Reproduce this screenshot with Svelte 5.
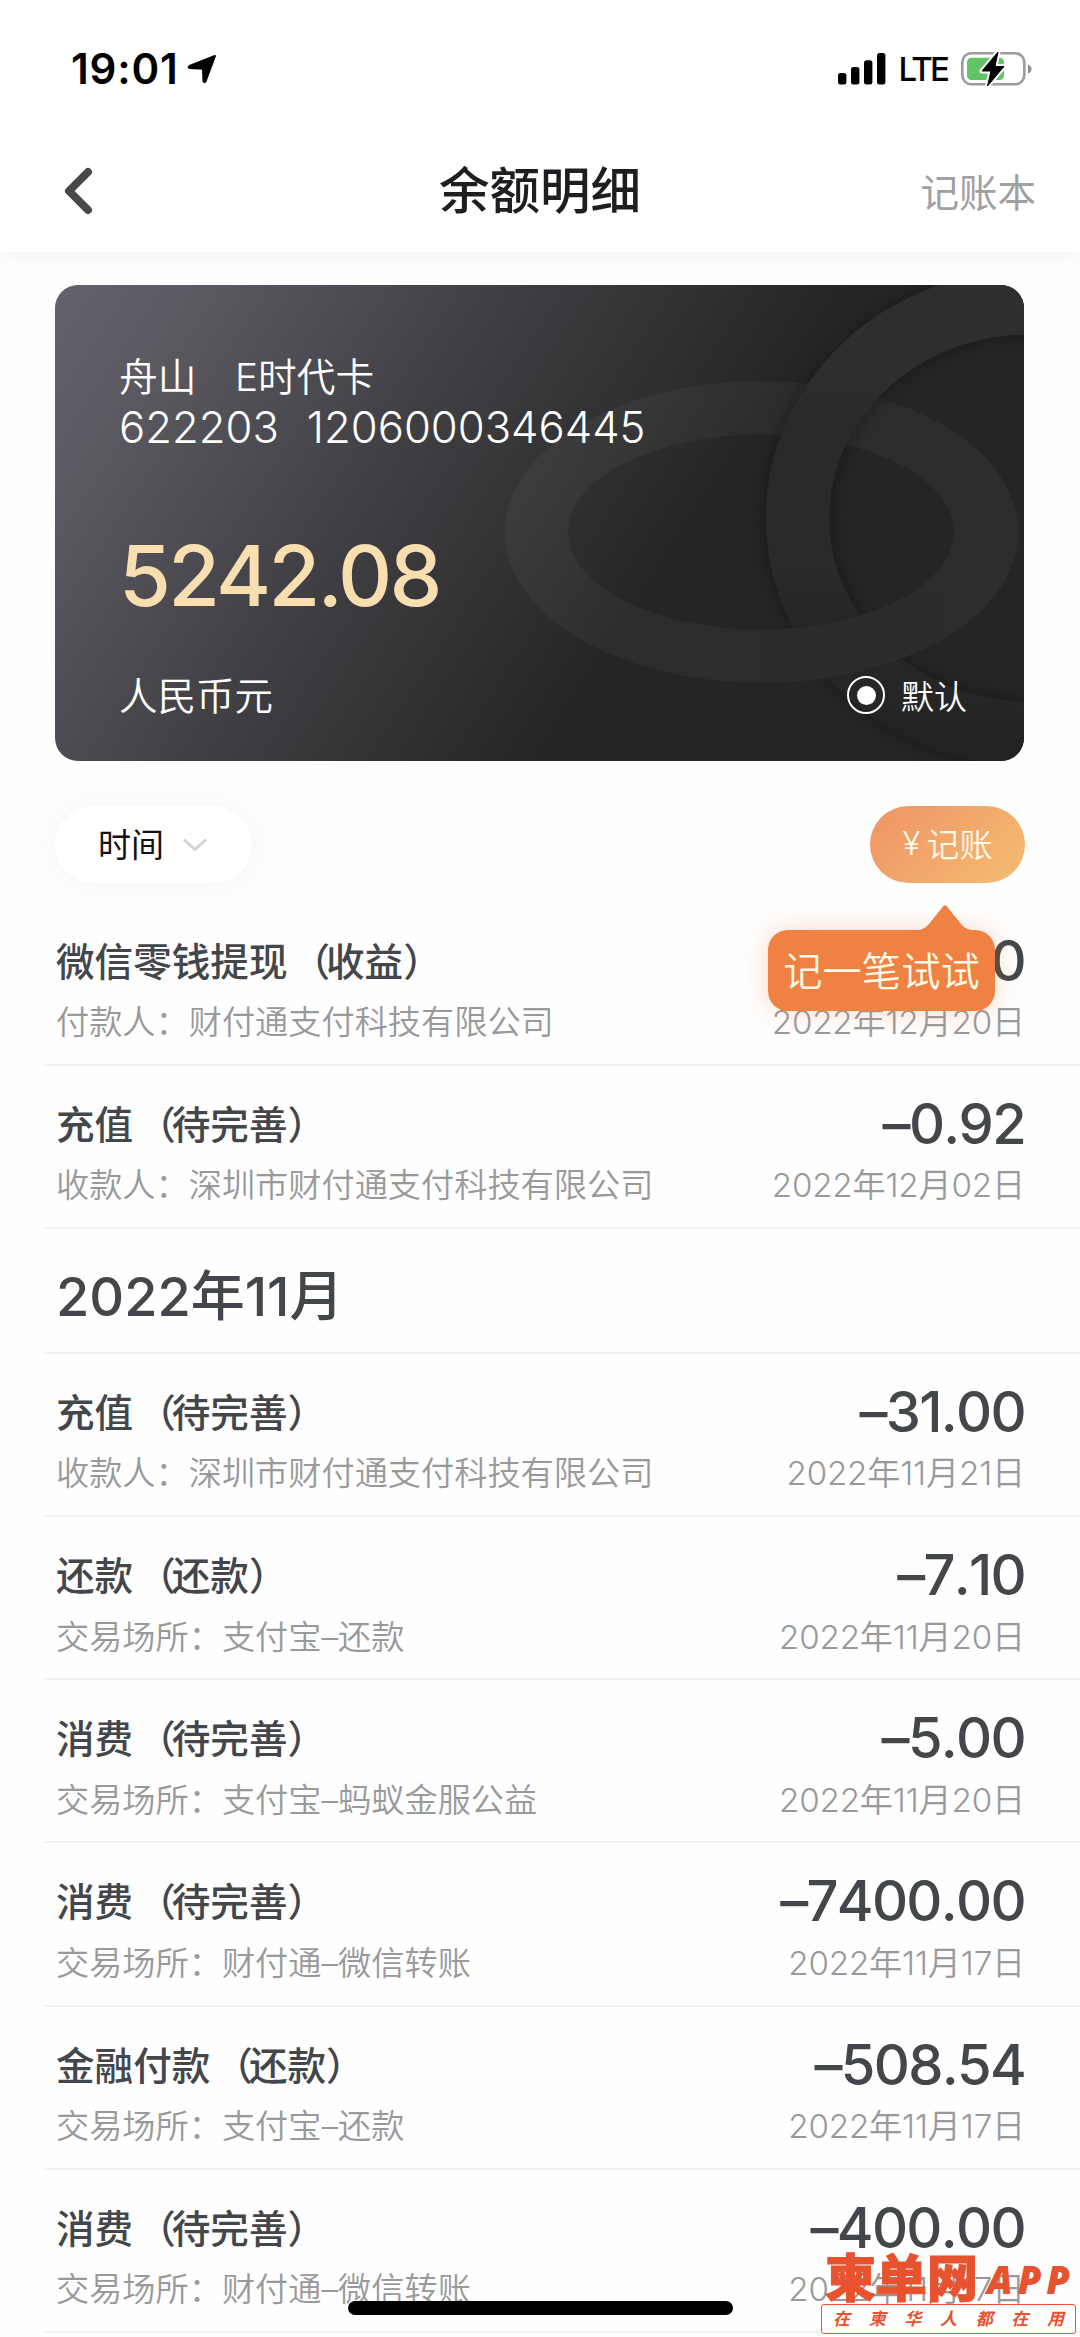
<script>
  const groups = [
    {
      month: "",
      items: [
        { title: "微信零钱提现", tag: "收益", sub: "付款人：财付通支付科技有限公司", amount: "2000.00", date: "2022年12月20日" },
        { title: "充值", tag: "待完善", sub: "收款人：深圳市财付通支付科技有限公司", amount: "–0.92", date: "2022年12月02日" },
      ],
    },
    {
      month: "2022年11月",
      items: [
        { title: "充值", tag: "待完善", sub: "收款人：深圳市财付通支付科技有限公司", amount: "–31.00", date: "2022年11月21日" },
        { title: "还款", tag: "还款", sub: "交易场所：支付宝–还款", amount: "–7.10", date: "2022年11月20日" },
        { title: "消费", tag: "待完善", sub: "交易场所：支付宝–蚂蚁金服公益", amount: "–5.00", date: "2022年11月20日" },
        { title: "消费", tag: "待完善", sub: "交易场所：财付通–微信转账", amount: "–7400.00", date: "2022年11月17日" },
        { title: "金融付款", tag: "还款", sub: "交易场所：支付宝–还款", amount: "–508.54", date: "2022年11月17日" },
        { title: "消费", tag: "待完善", sub: "交易场所：财付通–微信转账", amount: "–400.00", date: "2022年11月17日" },
      ],
    },
  ];

  let isDefault = $state(true);
  let showTip = $state(true);
</script>

<div class="screen" lang="zh-CN">
  <header>
    <div class="status">
      <div class="clock">
        <span>19:01</span>
        <svg width="31" height="30" viewBox="0 0 31 30">
          <path d="M28 2 L18.500 27.500 Q17.500 28.800 16.500 27.500 L16 14.800 L2.500 14 Q0.800 13.200 2.500 12 Z" fill="#000" stroke="#000" stroke-width="2" stroke-linejoin="round" />
        </svg>
      </div>
      <div class="signals">
        <svg width="48" height="32" viewBox="0 0 48 32">
          <rect x="0" y="20" width="8.4" height="11.5" rx="2.5" />
          <rect x="13" y="14" width="8.4" height="17.5" rx="2.5" />
          <rect x="26" y="7.3" width="8.4" height="24.2" rx="2.5" />
          <rect x="39" y="0" width="8.4" height="31.5" rx="2.5" />
        </svg>
        <span class="lte">LTE</span>
        <svg width="72" height="36" viewBox="0 0 72 36">
          <rect x="1.3" y="2.3" width="62" height="31" rx="9" fill="none" stroke="#9c9ca0" stroke-width="2.6" />
          <path d="M67 13.5 Q70.5 15 70.5 18 Q70.5 21 67 22.5 Z" fill="#8c8c90" />
          <rect x="6" y="6.7" width="37" height="22.4" rx="4.5" fill="#62c466" />
          <path d="M37 1 L21 20 H30 L26.5 35 L43 15.5 H34 Z" fill="#000" stroke="#fff" stroke-width="5" stroke-linejoin="round" />
          <path d="M37 1 L21 20 H30 L26.5 35 L43 15.5 H34 Z" fill="#000" stroke="#000" stroke-width="1" stroke-linejoin="round" />
        </svg>
      </div>
    </div>
    <nav>
      <button class="back" aria-label="返回">
        <svg width="36" height="50" viewBox="0 0 36 50">
          <path d="M29 6 L10 25 L29 44" fill="none" stroke="#484848" stroke-width="8" stroke-linecap="round" stroke-linejoin="round" />
        </svg>
      </button>
      <h1>余额明细</h1>
      <button class="book">记账本</button>
    </nav>
  </header>

  <main>
    <section class="card">
      <svg class="rings" viewBox="0 0 969 476">
        <defs>
          <linearGradient id="band" x1="0" y1="0" x2="0" y2="1">
            <stop offset="0" stop-color="#2f2f2f" />
            <stop offset="0.5" stop-color="#2a2a2a" />
            <stop offset="0.8" stop-color="#272727" />
            <stop offset="1" stop-color="#222" />
          </linearGradient>
          <filter id="soft" x="-20%" y="-20%" width="140%" height="140%">
            <feDropShadow dx="0" dy="0" stdDeviation="12" flood-color="#181818" flood-opacity="0.35" />
          </filter>
          <clipPath id="cross">
            <rect x="700" y="300" width="190" height="110" />
          </clipPath>
        </defs>
        <path d="M449.500 247a257 151 0 1 0 514 0a257 151 0 1 0 -514 0Z M513 247a193 97.500 0 1 0 386 0a193 97.500 0 1 0 -386 0Z" fill="#fff" fill-opacity="0.04" fill-rule="evenodd" />
        <path d="M711 233a264 248 0 1 0 528 0a264 248 0 1 0 -528 0Z M774 233a201 184 0 1 0 402 0a201 184 0 1 0 -402 0Z" fill="url(#band)" fill-rule="evenodd" filter="url(#soft)" />
        <path clip-path="url(#cross)" d="M449.500 247a257 151 0 1 0 514 0a257 151 0 1 0 -514 0Z M513 247a193 97.500 0 1 0 386 0a193 97.500 0 1 0 -386 0Z" fill="#2c2c2c" fill-rule="evenodd" />
      </svg>
      <div class="card-body">
        <div class="name">舟山　E时代卡</div>
        <div class="number"><span>622203</span><span>1206000346445</span></div>
        <div class="balance">5242.08</div>
        <div class="card-foot">
          <span>人民币元</span>
          <button class="default" onclick={() => (isDefault = !isDefault)}>
            <i class:on={isDefault}></i>
            默认
          </button>
        </div>
      </div>
    </section>

    <div class="toolbar">
      <button class="filter">
        时间
        <svg width="26" height="16" viewBox="0 0 26 16">
          <path d="M2 2.500 L13 12.500 L24 2.500" fill="none" stroke="#d4d4d4" stroke-width="3" />
        </svg>
      </button>
      <div class="record-wrap">
        <button class="record" onclick={() => (showTip = !showTip)}>
          <span class="yen">¥</span>记账
        </button>
        {#if showTip}
          <div class="tip">
            <svg width="56" height="28" viewBox="0 0 56 28">
              <path d="M0 28 V26 Q7 26 12 20 L26 2.500 Q28 0 30 2.500 L44 20 Q49 26 56 26 V28 Z" fill="#ef8143" />
            </svg>
            记一笔试试
          </div>
        {/if}
      </div>
    </div>

    {#each groups as group}
      {#if group.month}
        <h2>{group.month}</h2>
      {/if}
      {#each group.items as item}
        <div class="row">
          <div class="line">
            <span class="title">{item.title}<span class="open">（</span>{item.tag}）</span>
            <span class="amount">{item.amount}</span>
          </div>
          <div class="line small">
            <span class="sub">{item.sub}</span>
            <span class="date">{item.date}</span>
          </div>
        </div>
      {/each}
    {/each}
  </main>

  <div class="home-bar"></div>

  <div class="mark">
    <div class="mark-top"><b>柬单网</b><em>APP</em></div>
    <div class="mark-box">
      {#each "在柬华人都在用" as ch}<span>{ch}</span>{/each}
    </div>
  </div>
</div>

<style>
  :global(body) {
    background: #fefefe;
  }
  .screen {
    position: relative;
    width: 1080px;
    height: 2337px;
    overflow: hidden;
    background: #fefefe;
    font-family: Inter, "Noto Sans CJK SC", sans-serif;
    color: #43464b;
  }
  button {
    border: 0;
    padding: 0;
    background: none;
    font: inherit;
    color: inherit;
    cursor: pointer;
  }
  svg {
    display: block;
    flex: none;
  }

  /* header */
  header {
    height: 252px;
    background: #fff;
    box-shadow: 0 4px 22px rgba(0, 0, 0, 0.05);
  }
  .status {
    display: flex;
    justify-content: space-between;
    align-items: center;
    height: 137px;
    padding: 0 47px 0 71px;
    color: #000;
  }
  .clock,
  .signals {
    display: flex;
    align-items: center;
  }
  .clock {
    gap: 9px;
    font-size: 42px;
    font-weight: 600;
    letter-spacing: 0.8px;
  }
  .lte {
    margin: 0 14px 0 12px;
    font-size: 33px;
    font-weight: 500;
    letter-spacing: -2.8px;
    line-height: 36px;
  }
  nav {
    display: grid;
    grid-template-columns: 200px 1fr 200px;
    align-items: center;
    height: 107px;
    padding: 0 44px 0 59px;
  }
  h1 {
    margin: 0;
    padding-right: 15px;
    text-align: center;
    font-size: 50.5px;
    font-weight: 500;
    line-height: 60px;
    color: #1d1e22;
  }
  .book {
    padding-bottom: 1px;
    text-align: right;
    font-size: 38.5px;
    color: #a0a0a3;
  }

  /* card */
  .card {
    position: relative;
    width: 969px;
    height: 476px;
    margin: 33px 0 0 55px;
    border-radius: 23px;
    overflow: hidden;
    background: linear-gradient(123deg, #64636d 0%, #5a5960 12%, #414045 34%, #343436 47%, #252525 62%);
    color: #fff;
  }
  .rings {
    position: absolute;
    inset: 0;
    width: 100%;
    height: 100%;
  }
  .card-body {
    position: relative;
    padding: 66px 57px 0 64px;
    font-weight: 350;
  }
  .name {
    height: 52px;
    font-size: 38.7px;
    line-height: 52px;
  }
  .number {
    display: flex;
    gap: 28px;
    height: 50px;
    font-size: 43.6px;
    line-height: 50px;
  }
  .balance {
    height: 100px;
    margin-top: 73px;
    font-size: 84px;
    font-weight: 500;
    letter-spacing: -2.7px;
    line-height: 100px;
    color: #f9deb0;
  }
  .card-foot {
    display: flex;
    justify-content: space-between;
    align-items: center;
    height: 52px;
    margin-top: 44px;
    font-size: 38.5px;
  }
  .card-foot > span {
    padding-bottom: 6px;
  }
  .default {
    display: flex;
    align-items: center;
    gap: 16px;
    padding-bottom: 2px;
    font-size: 33px;
  }
  .default i {
    display: grid;
    place-items: center;
    width: 34px;
    height: 34px;
    border: 2px solid #fff;
    border-radius: 50%;
  }
  .default i.on::after {
    content: "";
    width: 19px;
    height: 19px;
    border-radius: 50%;
    background: #fff;
  }

  /* toolbar */
  .toolbar {
    display: flex;
    justify-content: space-between;
    align-items: flex-start;
    height: 96.5px;
    padding: 45px 55px 0;
  }
  .filter,
  .record {
    display: flex;
    align-items: center;
    box-sizing: border-box;
    height: 77px;
    padding-bottom: 3px;
    border-radius: 39px;
    font-size: 33px;
  }
  .filter {
    gap: 18px;
    width: 197px;
    padding-left: 43px;
    background: #fff;
    color: #111;
    box-shadow: 0 0 30px rgba(0, 0, 0, 0.05);
  }
  .filter svg {
    margin-top: 3px;
  }
  .record-wrap {
    position: relative;
  }
  .record {
    justify-content: center;
    gap: 6px;
    width: 155px;
    background: linear-gradient(135deg, #ef9366, #f4bd71);
    color: #fff9e8;
    font-weight: 350;
  }
  .tip {
    position: absolute;
    top: 124px;
    right: 30px;
    z-index: 2;
    width: 227px;
    height: 81px;
    border-radius: 20px;
    background: #ef8143;
    box-shadow: 0 0 26px rgba(239, 129, 67, 0.3);
    color: #fff9e8;
    font-size: 39.3px;
    font-weight: 350;
    line-height: 84px;
    text-align: center;
    white-space: nowrap;
  }
  .tip svg {
    position: absolute;
    top: -26px;
    left: 149px;
  }

  /* list */
  .row,
  h2 {
    box-sizing: border-box;
    margin: 0 0 0 44px;
    padding: 0 55px 0 12px;
    border-bottom: 2px solid #f2f2f3;
  }
  .row {
    height: 163.2px;
    padding-top: 25px;
  }
  h2 {
    height: 125px;
    font-size: 54px;
    font-weight: 500;
    line-height: 135px;
  }
  .line {
    display: flex;
    justify-content: space-between;
    align-items: center;
    height: 66px;
    white-space: nowrap;
  }
  .small {
    height: 52px;
    font-size: 33.2px;
    font-weight: 350;
    color: #99999c;
  }
  .title {
    padding-bottom: 4px;
    font-size: 38.6px;
    font-weight: 500;
  }
  .open {
    margin: 0 -4px 0 4px;
  }
  .amount {
    font-size: 56px;
    font-weight: 550;
    font-kerning: none;
    letter-spacing: -1.7px;
  }
  .date {
    letter-spacing: -0.2px;
  }

  /* overlays */
  .home-bar {
    position: absolute;
    left: 348px;
    bottom: 22px;
    width: 385px;
    height: 14px;
    border-radius: 7px;
    background: #000;
  }
  .mark {
    position: absolute;
    right: 4px;
    bottom: 3px;
    width: 255px;
    color: #e8532f;
  }
  .mark-top {
    display: flex;
    align-items: center;
    gap: 9px;
    height: 51px;
    padding-left: 4px;
    white-space: nowrap;
  }
  .mark-top b {
    font-size: 51px;
    font-weight: 900;
    line-height: 51px;
    -webkit-text-stroke: 1px #e8532f;
  }
  .mark-top em {
    font: italic 800 38px "Open Sans", sans-serif;
    letter-spacing: 5px;
  }
  .mark-box {
    display: flex;
    justify-content: space-between;
    align-items: center;
    box-sizing: border-box;
    height: 30px;
    padding: 0 11px;
    border: 1.5px solid #e8532f;
    border-radius: 3px;
    background: #fff;
    font-size: 17px;
    font-weight: 700;
    font-style: italic;
    line-height: 26px;
  }
</style>
